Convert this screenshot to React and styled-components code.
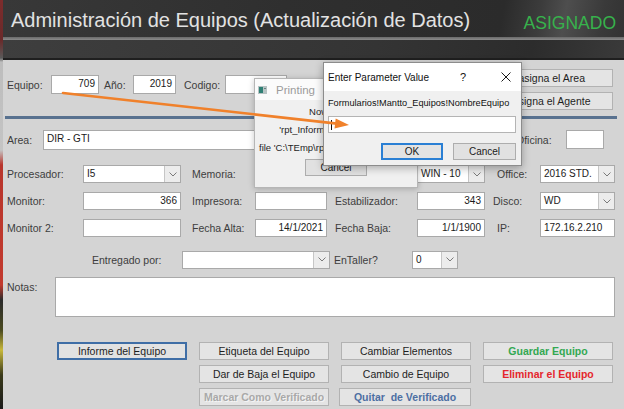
import * as React from "react";
import styled, { createGlobalStyle, css } from "styled-components";

const GlobalStyle = createGlobalStyle`
  html, body {
    margin: 0;
    padding: 0;
    background: #d4d4d4;
  }
  body {
    font-family: "Liberation Sans", Arial, sans-serif;
  }
`;

const Chevron = () => (
  <svg width="8" height="5" viewBox="0 0 8 5">
    <polyline points="0.5,0.5 4,4 7.5,0.5" fill="none" stroke="#7a7a7a" strokeWidth="1" />
  </svg>
);

const Combo = ({ value, w }) => (
  <ComboBox $w={w}>
    <ComboValue>{value}</ComboValue>
    <ComboArrow>
      <Chevron />
    </ComboArrow>
  </ComboBox>
);

const App = () => {
  return (
    <>
      <GlobalStyle />
      <Page>
        <EdgeStrip />
        <Main>
          <Header>
            <TitleBand>
              <Title>Administración de Equipos (Actualización de Datos)</Title>
              <Status>ASIGNADO</Status>
            </TitleBand>
            <HeaderRule />
            <SubBand />
          </Header>

          <Form>
            <TopRow>
              <KeyFields>
                <Label $w={44}>Equipo:</Label>
                <TextBox $w={48} $h={19} $align="right">709</TextBox>
                <Label $w={34} $pl={5}>Año:</Label>
                <TextBox $w={43} $h={19} $align="right">2019</TextBox>
                <Label $w={49} $pl={8}>Codigo:</Label>
                <TextBox $w={62} $h={19} />
              </KeyFields>
              <ReassignStack>
                <FormButton>Reasigna el Area</FormButton>
                <FormButton>Reasigna el Agente</FormButton>
              </ReassignStack>
            </TopRow>

            <BlueRule />

            <AreaRow>
              <Label $w={36}>Area:</Label>
              <TextBox $w={462} $h={20}>DIR - GTI</TextBox>
              <Label $w={61} $pl={11}>Oficina:</Label>
              <TextBox $w={38} $h={19} />
            </AreaRow>

            <FieldGrid>
              <Label>Procesador:</Label>
              <Combo value="I5" />
              <Label $pl={11}>Memoria:</Label>
              <TextBox />
              <Label $pl={8} />
              <Combo value="WIN - 10" />
              <Label $pl={12}>Office:</Label>
              <Combo value="2016 STD." />

              <Label>Monitor:</Label>
              <TextBox $align="right">366</TextBox>
              <Label $pl={11}>Impresora:</Label>
              <TextBox />
              <Label $pl={8}>Estabilizador:</Label>
              <TextBox $align="right">343</TextBox>
              <Label $pl={8}>Disco:</Label>
              <Combo value="WD" />

              <Label>Monitor 2:</Label>
              <TextBox />
              <Label $pl={11}>Fecha Alta:</Label>
              <TextBox $align="right">14/1/2021</TextBox>
              <Label $pl={8}>Fecha Baja:</Label>
              <TextBox $align="right">1/1/1900</TextBox>
              <Label $pl={12}>IP:</Label>
              <TextBox>172.16.2.210</TextBox>
            </FieldGrid>

            <DeliveryRow>
              <Label $w={90}>Entregado por:</Label>
              <Combo value="" w={148} />
              <Label $w={82} $pl={4}>EnTaller?</Label>
              <Combo value="0" w={46} />
            </DeliveryRow>

            <NotesRow>
              <Label $w={48} $top>Notas:</Label>
              <NotesBox />
            </NotesRow>

            <ActionGrid>
              <FormButton $focused>Informe del Equipo</FormButton>
              <FormButton>Etiqueta del Equipo</FormButton>
              <FormButton>Cambiar Elementos</FormButton>
              <FormButton $tone="save">Guardar Equipo</FormButton>

              <FormButton $col={2}>Dar de Baja el Equipo</FormButton>
              <FormButton>Cambio de Equipo</FormButton>
              <FormButton $tone="delete">Eliminar el Equipo</FormButton>

              <FormButton $col={2} $tone="disabled">Marcar Como Verificado</FormButton>
              <FormButton $tone="link" $shift={-2}>Quitar&nbsp; de Verificado</FormButton>
            </ActionGrid>
          </Form>
        </Main>

        <PrintDialog>
          <PrintTitleBar>
            <svg width="9" height="8" viewBox="0 0 9 8">
              <rect x="0" y="0" width="9" height="8" fill="#b8c4c4" />
              <rect x="1" y="1" width="4" height="6" fill="#2f7f74" />
              <rect x="6" y="2" width="2" height="1" fill="#6a7f80" />
            </svg>
            <span>Printing</span>
          </PrintTitleBar>
          <PrintBody>
            <PrintLine>Now Printing</PrintLine>
            <PrintLine>'rpt_Informe_Equipo' to the</PrintLine>
            <PrintLine $left>file 'C:\TEmp\rpt_Informe_Equipo.pdf'.</PrintLine>
            <DialogButton $w={62}>Cancel</DialogButton>
          </PrintBody>
        </PrintDialog>

        <ParamDialog>
          <ParamTitleBar>
            <ParamTitle>Enter Parameter Value</ParamTitle>
            <HelpMark>?</HelpMark>
            <svg width="10" height="10" viewBox="0 0 10 10">
              <line x1="0.5" y1="0.5" x2="9.5" y2="9.5" stroke="#1a1a1a" strokeWidth="1" />
              <line x1="9.5" y1="0.5" x2="0.5" y2="9.5" stroke="#1a1a1a" strokeWidth="1" />
            </svg>
          </ParamTitleBar>
          <ParamBody>
            <ParamPrompt>Formularios!Mantto_Equipos!NombreEquipo</ParamPrompt>
            <ParamInput>
              <Caret />
            </ParamInput>
            <ParamButtons>
              <DialogButton $w={62} $default>OK</DialogButton>
              <DialogButton $w={63}>Cancel</DialogButton>
            </ParamButtons>
          </ParamBody>
        </ParamDialog>

        <ArrowLayer width="624" height="409" viewBox="0 0 624 409">
          <line x1="63" y1="93" x2="337" y2="123.6" stroke="#f0812b" strokeWidth="2.6" strokeLinecap="round" />
          <polygon points="349,125 335.7,118.4 334.5,128.6" fill="#f0812b" />
        </ArrowLayer>
      </Page>
    </>
  );
};

const Page = styled.div`
  position: relative;
  width: 624px;
  height: 409px;
  overflow: hidden;
  display: flex;
  background: #d4d4d4;
  font-family: "Liberation Sans", Arial, sans-serif;
`;

const EdgeStrip = styled.div`
  flex: 0 0 3px;
  background: linear-gradient(
    180deg,
    #7d2c2c 0px,
    #6a2a2a 40px,
    #5a5a5a 58px,
    #bdbdbd 62px,
    #c4c4c4 150px,
    #b8352c 165px,
    #c23a2e 285px,
    #2a2a2a 300px,
    #4a4a20 330px,
    #c8b83a 350px,
    #3a3a1a 375px,
    #1a1a1a 409px
  );
`;

const Main = styled.div`
  flex: 1;
  min-width: 0;
  display: flex;
  flex-direction: column;
`;

const Header = styled.header`
  display: flex;
  flex-direction: column;
  height: 60px;
`;

const TitleBand = styled.div`
  height: 37px;
  display: flex;
  justify-content: space-between;
  align-items: flex-start;
  padding: 0 8px;
  background: linear-gradient(
    100deg,
    #383838 0%,
    #2f2f2f 45%,
    #2b2b2b 80%,
    #3c3c3c 86%,
    #4e4e4e 90%,
    #3a3a3a 96%,
    #333333 100%
  );
`;

const Title = styled.h1`
  margin: 9px 0 0;
  font-size: 20px;
  line-height: 23px;
  font-weight: 400;
  color: #e2e2e2;
  white-space: nowrap;
`;

const Status = styled.span`
  margin-top: 13px;
  font-size: 17.5px;
  line-height: 20px;
  color: #37b24c;
`;

const HeaderRule = styled.div`
  height: 3px;
  background: linear-gradient(180deg, #6a6a6a, #8a8a8a);
`;

const SubBand = styled.div`
  height: 18px;
  border-bottom: 2px solid #1f1f1f;
  background: linear-gradient(
    100deg,
    #3e3e3e 0%,
    #343434 60%,
    #2c2c2c 85%,
    #3a3a3a 100%
  );
`;

const Form = styled.div`
  flex: 1;
  display: flex;
  flex-direction: column;
  padding: 0 9px 0 4px;
`;

const TopRow = styled.div`
  display: flex;
  align-items: flex-start;
  padding-top: 9px;
`;

const KeyFields = styled.div`
  display: flex;
  align-items: center;
  margin-top: 6px;
`;

const Label = styled.span`
  flex-shrink: 0;
  box-sizing: border-box;
  ${(p) => p.$w && `width: ${p.$w}px;`}
  padding-left: ${(p) => p.$pl || 0}px;
  font-size: 10.5px;
  color: #3d3d3d;
  white-space: nowrap;
  overflow: hidden;
  ${(p) => p.$top && `align-self: flex-start; padding-top: 4px;`}
`;

const TextBox = styled.div`
  flex-shrink: 0;
  box-sizing: border-box;
  width: ${(p) => (p.$w ? `${p.$w}px` : "100%")};
  height: ${(p) => p.$h || 18}px;
  padding: 1px 3px 0;
  background: #fff;
  border: 1px solid #a9a9a9;
  font-size: 10px;
  line-height: 13px;
  color: #1a1a1a;
  text-align: ${(p) => p.$align || "left"};
  white-space: nowrap;
  overflow: hidden;
`;

const ComboBox = styled.div`
  flex-shrink: 0;
  box-sizing: border-box;
  display: flex;
  width: ${(p) => (p.$w ? `${p.$w}px` : "100%")};
  height: 18px;
  background: #fff;
  border: 1px solid #a9a9a9;
`;

const ComboValue = styled.span`
  flex: 1;
  padding: 1px 3px 0;
  font-size: 10px;
  line-height: 13px;
  color: #1a1a1a;
  white-space: nowrap;
  overflow: hidden;
`;

const ComboArrow = styled.span`
  flex: 0 0 15px;
  display: flex;
  align-items: center;
  justify-content: center;
  background: #ececec;
  border-left: 1px solid #c6c6c6;
`;

const ReassignStack = styled.div`
  margin-left: auto;
  margin-right: 2px;
  width: 136px;
  display: flex;
  flex-direction: column;
  gap: 5px;
`;

const toneStyles = {
  save: css`
    color: #33a852;
    font-weight: 700;
  `,
  delete: css`
    color: #e5262d;
    font-weight: 700;
  `,
  link: css`
    color: #4d6fa3;
    font-weight: 700;
  `,
  disabled: css`
    color: #a9a9a9;
    text-shadow: 1px 1px 0 #f4f4f4;
    font-weight: 700;
  `,
};

const FormButton = styled.button`
  box-sizing: border-box;
  height: 18px;
  padding: 0;
  margin: 0;
  background: #e4e4e4;
  border: 1px solid #b2b2b2;
  font-family: "Liberation Sans", Arial, sans-serif;
  font-size: 10.5px;
  color: #1e1e1e;
  white-space: nowrap;
  overflow: hidden;
  ${(p) => p.$col && `grid-column: ${p.$col};`}
  ${(p) => p.$shift && `margin-left: ${p.$shift}px;`}
  ${(p) =>
    p.$focused &&
    css`
      border: 2px solid #3f6ea6;
      background: #e2e2e2;
    `}
  ${(p) => p.$tone && toneStyles[p.$tone]}
`;

const BlueRule = styled.div`
  height: 3px;
  margin: 6px -2px 0;
  background: #58718f;
`;

const AreaRow = styled.div`
  display: flex;
  align-items: flex-start;
  margin-top: 11px;
  height: 20px;

  & > span:first-child {
    align-self: center;
  }
  & > span:nth-child(3) {
    align-self: center;
  }
`;

const FieldGrid = styled.div`
  display: grid;
  grid-template-columns: 76px 98px 74px 72px 90px 68px 55px 75px;
  grid-auto-rows: 18px;
  row-gap: 9px;
  align-items: center;
  margin-top: 15px;
`;

const DeliveryRow = styled.div`
  display: flex;
  align-items: center;
  height: 19px;
  margin: 13px 0 0 85px;
`;

const NotesRow = styled.div`
  display: flex;
  margin-top: 8px;
  height: 40px;
`;

const NotesBox = styled.div`
  flex: 1;
  background: #fff;
  border: 1px solid #a9a9a9;
`;

const ActionGrid = styled.div`
  display: grid;
  grid-template-columns: repeat(4, 130px);
  grid-auto-rows: 18px;
  column-gap: 12px;
  row-gap: 5px;
  margin: 25px 0 0 50px;
`;

const PrintDialog = styled.div`
  position: absolute;
  left: 254px;
  top: 78px;
  width: 164px;
  height: 110px;
  box-sizing: border-box;
  display: flex;
  flex-direction: column;
  background: #f0f0f0;
  border: 1px solid #b6b6b6;
  box-shadow: 0 1px 6px rgba(0, 0, 0, 0.22);
`;

const PrintTitleBar = styled.div`
  height: 21px;
  display: flex;
  align-items: center;
  gap: 9px;
  padding-left: 3px;
  background: #fbfbfb;
  font-size: 11.5px;
  color: #9b9b9b;
`;

const PrintBody = styled.div`
  flex: 1;
  display: flex;
  flex-direction: column;
  align-items: center;
  gap: 5px;
  padding-top: 5px;
  overflow: hidden;
`;

const PrintLine = styled.div`
  max-width: 100%;
  box-sizing: border-box;
  font-size: 9.5px;
  line-height: 13px;
  color: #1e1e1e;
  white-space: nowrap;
  overflow: hidden;
  ${(p) => p.$left && `align-self: flex-start; padding-left: 4px;`}
`;

const DialogButton = styled.button`
  box-sizing: border-box;
  width: ${(p) => p.$w}px;
  height: 17px;
  margin: 0;
  padding: 0;
  background: #e1e1e1;
  border: 1px solid #adadad;
  font-family: "Liberation Sans", Arial, sans-serif;
  font-size: 10px;
  color: #1a1a1a;
  ${(p) =>
    p.$default &&
    css`
      border: 2px solid #2a7fd4;
      background: #e3e3e3;
    `}
`;

const ParamDialog = styled.div`
  position: absolute;
  left: 323px;
  top: 62px;
  width: 199px;
  height: 104px;
  box-sizing: border-box;
  display: flex;
  flex-direction: column;
  background: #f0f0f0;
  border: 1px solid #8c8c8c;
  box-shadow: 0 2px 8px rgba(0, 0, 0, 0.3);
`;

const ParamTitleBar = styled.div`
  height: 28px;
  display: flex;
  align-items: center;
  padding: 0 10px 0 4px;
  background: #ffffff;
`;

const ParamTitle = styled.span`
  flex: 1;
  font-size: 10px;
  color: #111;
`;

const HelpMark = styled.span`
  margin-right: 35px;
  font-size: 11px;
  color: #111;
`;

const ParamBody = styled.div`
  flex: 1;
  display: flex;
  flex-direction: column;
  padding: 5px 5px 0 4px;
`;

const ParamPrompt = styled.div`
  font-size: 9.2px;
  line-height: 14px;
  color: #111;
  white-space: nowrap;
`;

const ParamInput = styled.div`
  box-sizing: border-box;
  height: 17px;
  margin-top: 6px;
  padding: 3px 2px;
  background: #fff;
  border: 1px solid #b4b4b4;
`;

const Caret = styled.div`
  width: 1px;
  height: 10px;
  background: #111;
`;

const ParamButtons = styled.div`
  display: flex;
  justify-content: flex-end;
  gap: 10px;
  margin-top: 10px;
`;

const ArrowLayer = styled.svg`
  position: absolute;
  left: 0;
  top: 0;
  pointer-events: none;
`;

export default App;
